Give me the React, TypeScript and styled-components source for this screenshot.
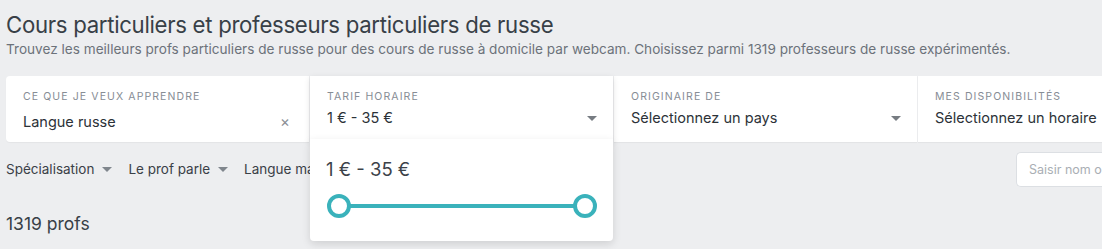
import React from "react";
import styled, { createGlobalStyle } from "styled-components";

const GlobalStyle = createGlobalStyle`
  html, body {
    margin: 0;
    background: #edeef0;
    overflow: hidden;
  }
  body {
    font-family: Inter, "Noto Sans", Arial, sans-serif;
    color: #384047;
  }
`

const Page = styled.div`
  width: 1102px;
  height: 249px;
  padding: 10px 0 0 6px;
  box-sizing: border-box;
  overflow: hidden;
`

const Title = styled.h1`
  margin: 0;
  font-size: 22.2px;
  font-weight: 400;
  letter-spacing: -0.3px;
  line-height: 30px;
  color: #384047;
  white-space: nowrap;
`

const Subtitle = styled.p`
  margin: 0;
  font-size: 13.6px;
  line-height: 18px;
  color: #6c727a;
  white-space: nowrap;
`

const FilterBar = styled.div`
  display: flex;
  gap: 1px;
  margin-top: 18px;
  width: 1220px;
  height: 66px;
`

const Cell = styled.div<{ $active?: boolean; $first?: boolean }>`
  position: relative;
  flex: 0 0 303px;
  box-sizing: border-box;
  padding: 14px 16px 0 17px;
  background: #fff;
  border-radius: ${p => (p.$first ? "4px 0 0 4px" : "0")};
  box-shadow: ${p => (p.$active ? "0 2px 6px rgba(0,0,0,0.12)" : "0 1px 1px rgba(0,0,0,0.04)")};
  z-index: ${p => (p.$active ? 2 : 1)};
`

const Label = styled.div`
  font-size: 10.5px;
  letter-spacing: 1.1px;
  text-transform: uppercase;
  color: #878d95;
  line-height: 14px;
  white-space: nowrap;
`

const ValueRow = styled.div<{ $tight?: boolean }>`
  display: flex;
  align-items: center;
  justify-content: space-between;
  margin-top: ${p => (p.$tight ? "4px" : "8px")};
  font-size: 14.5px;
  color: #2c3238;
  line-height: 20px;
  white-space: nowrap;
`

const Caret = styled.span<{ $color?: string }>`
  display: inline-block;
  width: 0;
  height: 0;
  border-left: 5px solid transparent;
  border-right: 5px solid transparent;
  border-top: 5px solid ${p => p.$color ?? "#777c82"};
`

const Clear = styled.span`
  font-size: 15px;
  color: #8b9096;
  margin-right: 3px;
`

const Dropdown = styled.div`
  position: absolute;
  left: 0;
  top: 63px;
  width: 303px;
  height: 102px;
  box-sizing: border-box;
  background: #fff;
  border-radius: 0 0 4px 4px;
  box-shadow: 0 3px 8px rgba(0, 0, 0, 0.13);
  padding: 19px 16px 0 16px;
`

const RangeText = styled.div`
  font-size: 18.5px;
  color: #3c4249;
  line-height: 22px;
`

const Slider = styled.div`
  position: relative;
  margin: 14px 0 0 1px;
  width: 270px;
  height: 24px;
`

const Track = styled.div`
  position: absolute;
  left: 10px;
  right: 10px;
  top: 10px;
  height: 4px;
  background: #3ab2bb;
`

const Handle = styled.div<{ $side: "left" | "right" }>`
  position: absolute;
  top: 0;
  ${p => p.$side}: 0;
  width: 16px;
  height: 16px;
  border: 4px solid #3ab2bb;
  border-radius: 50%;
  background: #fff;
`

const SecondRow = styled.div`
  display: flex;
  align-items: center;
  justify-content: space-between;
  margin-top: 9px;
  height: 36px;
`

const SubFilters = styled.div`
  display: flex;
  align-items: center;
  gap: 16px;
`

const SubFilter = styled.div`
  display: flex;
  align-items: center;
  gap: 8px;
  font-size: 13.5px;
  color: #3a4047;
  white-space: nowrap;
`

const Search = styled.div`
  width: 110px;
  height: 35px;
  box-sizing: border-box;
  margin-right: -24px;
  border: 1px solid #dcdfe3;
  border-right: none;
  border-radius: 5px 0 0 5px;
  background: #fff;
  padding: 0 0 0 12px;
  display: flex;
  align-items: center;
  font-size: 12.5px;
  color: #a9aeb4;
  white-space: nowrap;
  overflow: hidden;
`

const Count = styled.div`
  margin-top: 26px;
  font-size: 17.5px;
  line-height: 22px;
  color: #384047;
`

const App = () => {
  return (
    <>
      <GlobalStyle />
      <Page>
        <Title>Cours particuliers et professeurs particuliers de russe</Title>
        <Subtitle>
          Trouvez les meilleurs profs particuliers de russe pour des cours de russe à domicile par webcam. Choisissez parmi 1319 professeurs de russe expérimentés.
        </Subtitle>

        <FilterBar>
          <Cell $first>
            <Label>Ce que je veux apprendre</Label>
            <ValueRow>
              <span>Langue russe</span>
              <Clear>×</Clear>
            </ValueRow>
          </Cell>
          <Cell $active>
            <Label>Tarif horaire</Label>
            <ValueRow $tight>
              <span>1 € - 35 €</span>
              <Caret />
            </ValueRow>
            <Dropdown>
              <RangeText>1 € - 35 €</RangeText>
              <Slider>
                <Track />
                <Handle $side="left" />
                <Handle $side="right" />
              </Slider>
            </Dropdown>
          </Cell>
          <Cell>
            <Label>Originaire de</Label>
            <ValueRow $tight>
              <span>Sélectionnez un pays</span>
              <Caret />
            </ValueRow>
          </Cell>
          <Cell>
            <Label>Mes disponibilités</Label>
            <ValueRow $tight>
              <span>Sélectionnez un horaire</span>
            </ValueRow>
          </Cell>
        </FilterBar>

        <SecondRow>
          <SubFilters>
            <SubFilter>Spécialisation <Caret $color="#80868d" /></SubFilter>
            <SubFilter>Le prof parle <Caret $color="#80868d" /></SubFilter>
            <SubFilter>Langue maternelle <Caret $color="#80868d" /></SubFilter>
          </SubFilters>
          <Search>Saisir nom ou mot-clé</Search>
        </SecondRow>

        <Count>1319 profs</Count>
      </Page>
    </>
  )
}

export default App
